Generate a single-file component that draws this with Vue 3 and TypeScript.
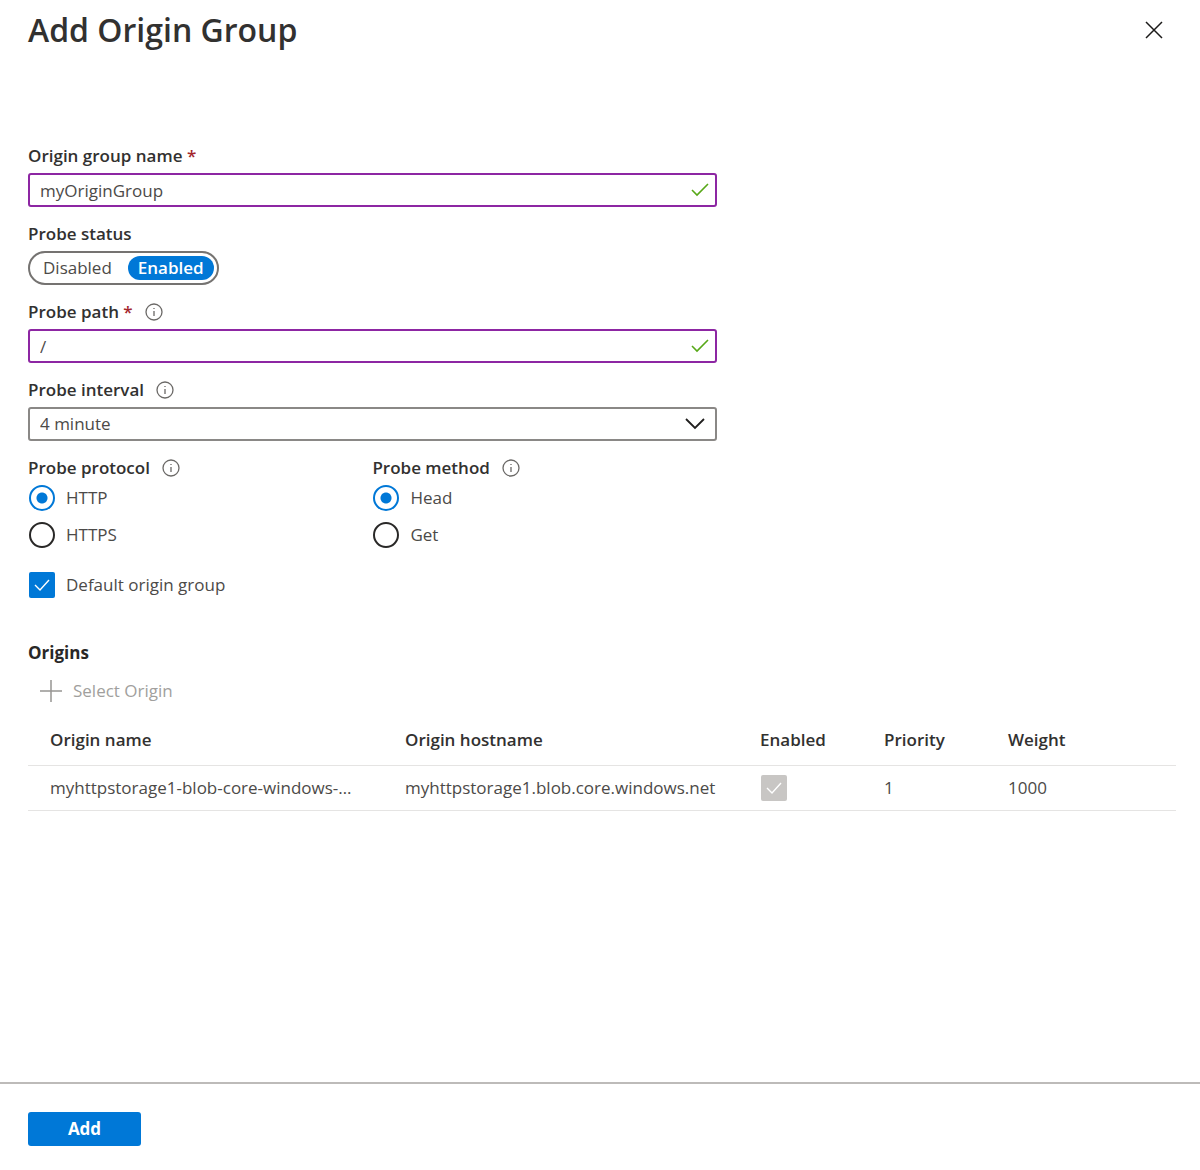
<script setup lang="ts">
import { ref } from 'vue'

interface Origin {
  name: string
  hostname: string
  enabled: boolean
  priority: number
  weight: number
}

const groupName = ref('myOriginGroup')
const probeStatus = ref('Enabled')
const probePath = ref('/')
const interval = ref('4 minute')
const protocol = ref('HTTP')
const method = ref('Head')
const isDefault = ref(true)

const intervals = ['1 minute', '2 minute', '4 minute', '8 minute']
const origins: Origin[] = [
  {
    name: 'myhttpstorage1-blob-core-windows-net',
    hostname: 'myhttpstorage1.blob.core.windows.net',
    enabled: true,
    priority: 1,
    weight: 1000,
  },
]
</script>

<template>
  <form class="panel" @submit.prevent>
    <header class="head">
      <h1>Add Origin Group</h1>
      <button type="button" class="close" aria-label="Close">
        <svg width="18" height="18" viewBox="0 0 18 18"><path d="M1 1L17 17M17 1L1 17" /></svg>
      </button>
    </header>

    <main class="body">
      <div class="fields">
        <div class="field">
          <div class="label">
            <label for="group-name">Origin group name <span class="req">*</span></label>
          </div>
          <div class="control">
            <input id="group-name" v-model="groupName" class="box valid" type="text" />
            <svg class="ok" width="18" height="14" viewBox="0 0 18 14"><path d="M1 7L6 12L17 1" /></svg>
          </div>
        </div>

        <fieldset class="field">
          <legend class="label">Probe status</legend>
          <div class="toggle">
            <label v-for="s in ['Disabled', 'Enabled']" :key="s" :class="{ on: probeStatus === s }">
              <input v-model="probeStatus" class="hidden" type="radio" name="status" :value="s" />{{ s }}
            </label>
          </div>
        </fieldset>

        <div class="field">
          <div class="label">
            <label for="probe-path">Probe path <span class="req">*</span></label>
            <svg class="info" width="18" height="18" viewBox="0 0 18 18"><circle cx="9" cy="9" r="8" /><path d="M9 8V13M9 5V6" /></svg>
          </div>
          <div class="control">
            <input id="probe-path" v-model="probePath" class="box valid" type="text" />
            <svg class="ok" width="18" height="14" viewBox="0 0 18 14"><path d="M1 7L6 12L17 1" /></svg>
          </div>
        </div>

        <div class="field">
          <div class="label">
            <label for="interval">Probe interval</label>
            <svg class="info" width="18" height="18" viewBox="0 0 18 18"><circle cx="9" cy="9" r="8" /><path d="M9 8V13M9 5V6" /></svg>
          </div>
          <div class="control">
            <select id="interval" v-model="interval" class="box">
              <option v-for="i in intervals" :key="i">{{ i }}</option>
            </select>
            <svg class="chevron" width="20" height="12" viewBox="0 0 20 12"><path d="M1 1L10 10L19 1" /></svg>
          </div>
        </div>

        <div class="pair">
          <fieldset>
            <legend class="label">
              Probe protocol
              <svg class="info" width="18" height="18" viewBox="0 0 18 18"><circle cx="9" cy="9" r="8" /><path d="M9 8V13M9 5V6" /></svg>
            </legend>
            <div class="choices">
              <label v-for="p in ['HTTP', 'HTTPS']" :key="p" class="choice">
                <input v-model="protocol" class="radio" type="radio" name="protocol" :value="p" />{{ p }}
              </label>
            </div>
          </fieldset>
          <fieldset>
            <legend class="label">
              Probe method
              <svg class="info" width="18" height="18" viewBox="0 0 18 18"><circle cx="9" cy="9" r="8" /><path d="M9 8V13M9 5V6" /></svg>
            </legend>
            <div class="choices">
              <label v-for="m in ['Head', 'Get']" :key="m" class="choice">
                <input v-model="method" class="radio" type="radio" name="method" :value="m" />{{ m }}
              </label>
            </div>
          </fieldset>
        </div>

        <label class="choice default">
          <span class="tick">
            <input v-model="isDefault" type="checkbox" />
            <svg width="18" height="14" viewBox="0 0 18 14"><path d="M2 7L7 12L16 2" /></svg>
          </span>
          Default origin group
        </label>
      </div>

      <section class="origins">
        <h2>Origins</h2>
        <button type="button" class="select-origin" disabled>
          <svg width="22" height="22" viewBox="0 0 22 22"><path d="M11 0V22M0 11H22" /></svg>
          Select Origin
        </button>
        <table>
          <colgroup>
            <col /><col /><col class="narrow" /><col class="narrow" /><col class="last" />
          </colgroup>
          <thead>
            <tr>
              <th>Origin name</th>
              <th>Origin hostname</th>
              <th>Enabled</th>
              <th>Priority</th>
              <th>Weight</th>
            </tr>
          </thead>
          <tbody>
            <tr v-for="o in origins" :key="o.name">
              <td>{{ o.name }}</td>
              <td>{{ o.hostname }}</td>
              <td>
                <span class="tick">
                  <input type="checkbox" :checked="o.enabled" disabled :aria-label="'Enabled: ' + o.hostname" />
                  <svg width="18" height="14" viewBox="0 0 18 14"><path d="M2 7L7 12L16 2" /></svg>
                </span>
              </td>
              <td>{{ o.priority }}</td>
              <td>{{ o.weight }}</td>
            </tr>
          </tbody>
        </table>
      </section>
    </main>

    <footer class="foot">
      <button type="submit" class="add">Add</button>
    </footer>
  </form>
</template>

<style>
body {
  margin: 0;
  background: #fff;
}
</style>

<style scoped>
* {
  box-sizing: border-box;
}
.panel {
  display: flex;
  flex-direction: column;
  min-height: 100vh;
  font-family: 'Open Sans', 'Noto Sans', sans-serif;
  font-size: 17px;
  line-height: 26px;
  color: #4c4a48;
}
button,
input,
select {
  font: inherit;
  color: inherit;
  margin: 0;
}
svg {
  display: block;
  flex: none;
  fill: none;
}
h1,
h2,
fieldset,
legend {
  margin: 0;
  padding: 0;
  border: 0;
  min-width: 0;
}
.head {
  display: flex;
  justify-content: space-between;
  align-items: center;
  height: 60px;
  padding: 0 36px 0 28px;
}
h1 {
  font-size: 32px;
  line-height: 44px;
  font-weight: 600;
  color: #323130;
}
.close {
  padding: 1px;
  border: 0;
  background: none;
  stroke: #1b1a19;
  stroke-width: 1.5;
}
.body {
  flex: 1;
  padding: 83px 24px 24px 28px;
}
.fields {
  width: 60%;
}
.field {
  margin-bottom: 14px;
}
.label {
  display: flex;
  align-items: center;
  gap: 12px;
  height: 26px;
  margin-bottom: 4px;
  font-weight: 600;
  color: #323130;
}
.req {
  color: #a4262c;
}
.info {
  stroke: #6b6967;
  stroke-width: 1.3;
}
.control {
  position: relative;
}
.box {
  display: block;
  width: 100%;
  height: 34px;
  padding: 0 40px 0 10px;
  border: 2px solid #8a8886;
  border-radius: 3px;
  background: #fff;
  outline: 0;
  appearance: none;
}
.valid {
  border-color: #8d26a3;
}
.ok,
.chevron {
  position: absolute;
  top: 0;
  bottom: 0;
  margin: auto 0;
  pointer-events: none;
}
.ok {
  right: 8px;
  stroke: #57a818;
  stroke-width: 1.6;
}
.chevron {
  right: 12px;
  stroke: #201f1e;
  stroke-width: 1.8;
}
.toggle {
  display: flex;
  align-items: center;
  gap: 6px;
  width: fit-content;
  height: 34px;
  padding: 0 3px;
  border: 2px solid #757371;
  border-radius: 17px;
}
.toggle label {
  padding: 0 10px;
  border-radius: 12px;
  line-height: 24px;
}
.toggle .on {
  background: #0078d7;
  color: #fff;
  font-weight: 600;
}
.hidden {
  position: absolute;
  opacity: 0;
  pointer-events: none;
}
.pair {
  display: grid;
  grid-template-columns: 1fr 1fr;
}
.choices {
  display: flex;
  flex-direction: column;
  gap: 11px;
}
.choice {
  display: flex;
  align-items: center;
  gap: 11px;
  padding-left: 1px;
}
.radio {
  appearance: none;
  width: 26px;
  height: 26px;
  border: 2px solid #292827;
  border-radius: 50%;
}
.radio:checked {
  border-color: #0078d7;
  background: radial-gradient(circle, #0078d7 5px, #fff 6px);
}
.default {
  margin-top: 24px;
}
.tick {
  display: grid;
  place-items: center;
  width: 26px;
  height: 26px;
}
.tick > * {
  grid-area: 1 / 1;
}
.tick input {
  appearance: none;
  width: 26px;
  height: 26px;
  border: 1px solid #292827;
  border-radius: 2px;
}
.tick input:checked {
  border: 0;
  background: #0078d7;
}
.tick input:disabled {
  background: #c8c6c4;
}
.tick svg {
  position: relative;
  stroke: #fff;
  stroke-width: 1.4;
  pointer-events: none;
}
.origins {
  margin-top: 42px;
}
h2 {
  font-size: 17px;
  line-height: 26px;
  font-weight: 700;
  color: #292827;
}
.select-origin {
  display: flex;
  align-items: center;
  gap: 11px;
  height: 26px;
  margin: 12px 0 11px;
  padding: 0 12px;
  border: 0;
  background: none;
  color: #a19f9d;
  stroke: #979593;
  stroke-width: 1.5;
}
table {
  width: 100%;
  table-layout: fixed;
  border-collapse: separate;
  border-spacing: 0;
  text-align: left;
}
.narrow {
  width: 124px;
}
.last {
  width: 190px;
}
th,
td {
  padding: 0 0 0 22px;
  border-bottom: 1px solid #e5e4e3;
  white-space: nowrap;
  overflow: hidden;
  text-overflow: ellipsis;
}
td:first-child {
  padding-right: 28px;
}
th {
  height: 51px;
  font-weight: 600;
  color: #323130;
}
td {
  height: 45px;
}
td .tick {
  margin-left: 1px;
}
.foot {
  padding: 28px 28px 24px;
  border-top: 2px solid #bdbbb9;
}
.add {
  display: block;
  width: 113px;
  height: 34px;
  padding: 0;
  border: 0;
  border-radius: 3px;
  background: #0078d7;
  color: #fff;
  font-weight: 700;
}
</style>
